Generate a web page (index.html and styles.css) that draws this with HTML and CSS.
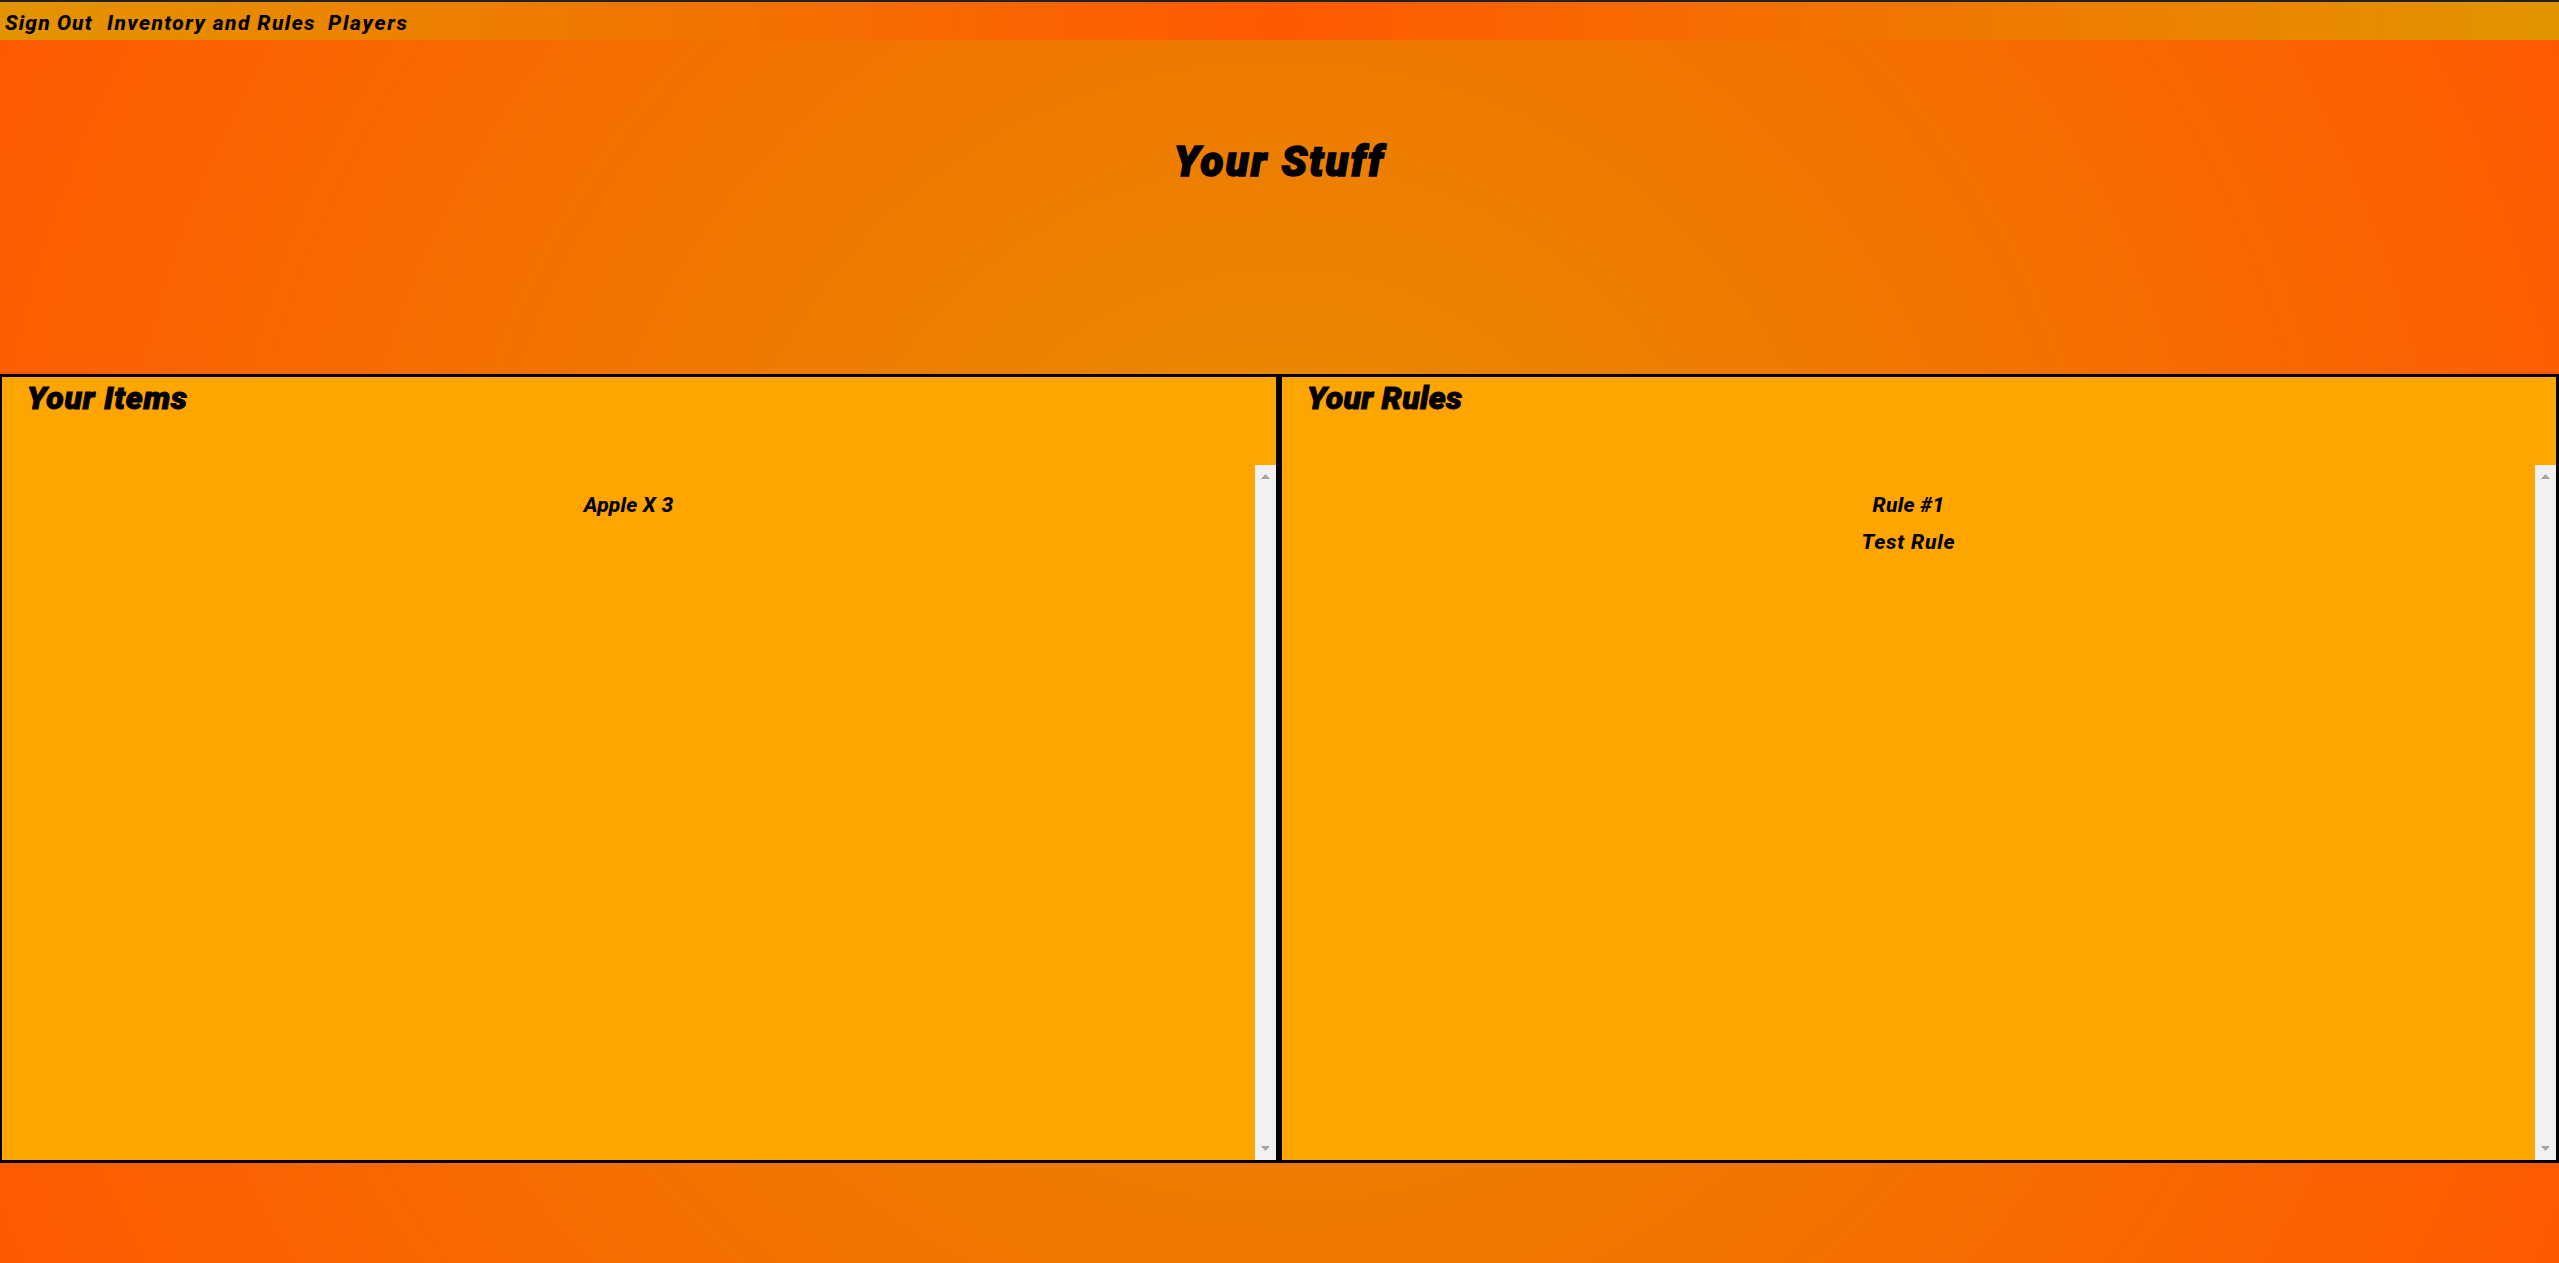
FILE: index.html
```html
<!DOCTYPE html>
<html lang="en">
<head>
<meta charset="utf-8">
<title>Your Stuff</title>
<link rel="stylesheet" href="styles.css">
</head>
<body>
<nav class="nav">
  <a class="nav-link sign-out">Sign Out</a>
  <a class="nav-link inventory">Inventory and Rules</a>
  <a class="nav-link players">Players</a>
</nav>
<header class="hero"><h1 class="title">Your Stuff</h1></header>
<main class="panels">
  <section class="panel">
    <h2 class="panel-title items-title">Your Items</h2>
    <div class="panel-body">
      <div class="list"><p class="entry apple">Apple X 3</p></div>
      <div class="track">
        <svg width="9" height="5" viewBox="0 0 9 5"><path d="M0 5L4.5 0L9 5Z" fill="#a3a3a3"/></svg>
        <svg width="9" height="5" viewBox="0 0 9 5"><path d="M0 0L4.5 5L9 0Z" fill="#a3a3a3"/></svg>
      </div>
    </div>
  </section>
  <section class="panel">
    <h2 class="panel-title rules-title">Your Rules</h2>
    <div class="panel-body">
      <div class="list"><p class="entry rule">Rule #1</p><p class="entry test">Test Rule</p></div>
      <div class="track">
        <svg width="9" height="5" viewBox="0 0 9 5"><path d="M0 5L4.5 0L9 5Z" fill="#a3a3a3"/></svg>
        <svg width="9" height="5" viewBox="0 0 9 5"><path d="M0 0L4.5 5L9 0Z" fill="#a3a3a3"/></svg>
      </div>
    </div>
  </section>
</main>
</body>
</html>
```
FILE: styles.css
```css
* { box-sizing: border-box; }
body {
  margin: 0;
  height: 1263px;
  overflow: hidden;
  color: #000;
  font-family: Roboto, "Liberation Sans", sans-serif;
  font-style: italic;
  font-weight: 800;
  background: radial-gradient(circle, #e59000, #ff5900);
}
.nav {
  display: flex;
  gap: 12px;
  height: 40px;
  padding: 8px 0 0 5px;
  border-top: 2px solid #222;
  background: radial-gradient(circle, #ff5900, #e39400);
}
.nav-link { font-size: 21px; line-height: 26px; white-space: nowrap; }
.sign-out { width: 90px; letter-spacing: 1.1px; }
.inventory { width: 209px; letter-spacing: 1.4px; }
.players { letter-spacing: 1.7px; }
.hero {
  display: flex;
  justify-content: center;
  height: 334px;
  padding-top: 97px;
}
.title {
  margin: 0;
  font-size: 42px;
  line-height: 50px;
  font-weight: 900;
  letter-spacing: 2.3px;
  -webkit-text-stroke: 1.6px #000;
}
.panels {
  display: grid;
  grid-template-columns: 1280px 1280px;
  height: 789px;
  margin-left: -1px;
}
.panel {
  display: flex;
  flex-direction: column;
  border: 3px solid #000;
  background: #ffa500;
}
.panel-title {
  height: 88px;
  margin: 0;
  padding: 2px 0 0 25px;
  font-size: 32px;
  line-height: 38px;
  font-weight: 900;
  -webkit-text-stroke: 1px #000;
}
.items-title { letter-spacing: 0.8px; }
.rules-title { letter-spacing: 0.3px; }
.panel-body { display: flex; flex: 1; }
.list { flex: 1; padding-top: 27px; text-align: center; }
.entry { margin: 0; height: 37px; font-size: 21px; line-height: 26px; }
.apple { letter-spacing: 0.2px; }
.rule { letter-spacing: 0.3px; }
.test { letter-spacing: 0.8px; }
.track {
  display: flex;
  flex-direction: column;
  justify-content: space-between;
  align-items: center;
  width: 21px;
  padding: 9px 0;
  background: #f1f1f1;
}
```
